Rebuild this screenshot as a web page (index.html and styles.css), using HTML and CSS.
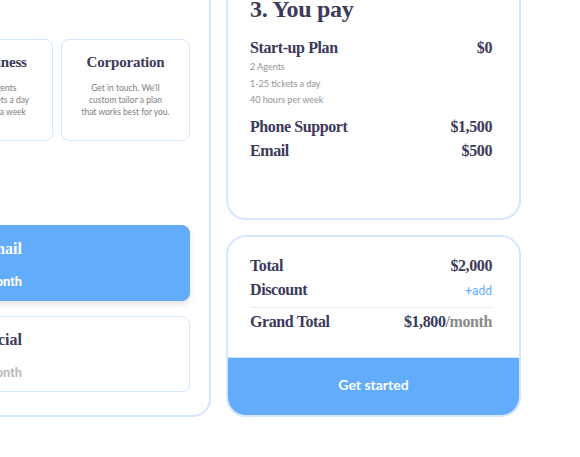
FILE: index.html
```html
<!DOCTYPE html>
<html lang="en">
<head>
    <meta charset="UTF-8">
    <meta name="viewport" content="width=device-width, initial-scale=1.0">
    <title>Build your support plan</title>
    <link rel="stylesheet" href="styles.css">
</head>
<body>
    <div class="builder">
        <section class="panel choose-panel">
            <h2 class="step-title">1. Pick a plan</h2>
            <div class="plans">
                <div class="plan">
                    <h3>Start-up</h3>
                    <p>2 Agents<br>1-25 tickets a day<br>40 hours per week</p>
                </div>
                <div class="plan">
                    <h3>Business</h3>
                    <p>5 Agents<br>50 tickets a day<br>80 hrs a week</p>
                </div>
                <div class="plan wide">
                    <h3>Corporation</h3>
                    <p>Get in touch. We'll<br>custom tailor a plan<br>that works best for you.</p>
                </div>
            </div>

            <h2 class="step-title channels-title">2. Add channels</h2>
            <div class="channels">
                <div class="channel selected">
                    <h3>Email</h3>
                    <span class="channel-price">$500/month</span>
                </div>
                <div class="channel">
                    <h3>Social</h3>
                    <span class="channel-price">$500/month</span>
                </div>
            </div>
        </section>

        <aside class="summary">
            <div class="panel pay-card">
                <h2 class="step-title">3. You pay</h2>
                <div class="row"><span>Start-up Plan</span><span>$0</span></div>
                <ul class="plan-details">
                    <li>2 Agents</li>
                    <li>1-25 tickets a day</li>
                    <li>40 hours per week</li>
                </ul>
                <div class="row extra"><span>Phone Support</span><span>$1,500</span></div>
                <div class="row"><span>Email</span><span>$500</span></div>
            </div>

            <div class="panel total-card">
                <div class="totals">
                    <div class="row"><span>Total</span><span>$2,000</span></div>
                    <div class="row"><span>Discount</span><a href="#" class="add-link">+add</a></div>
                    <div class="row grand"><span>Grand Total</span><span>$1,800<span class="per">/month</span></span></div>
                </div>
                <button class="start-button">Get started</button>
            </div>
        </aside>
    </div>
</body>
</html>
```

FILE: styles.css
```css
body {
    margin: 0;
    font-family: Lato, "Open Sans", sans-serif;
    background-color: white;
    color: #3b3a5a;
    overflow: hidden;
}
.builder {
    display: flex;
    gap: 15px;
    margin: -29px 0 0 -234px;
}
.panel {
    box-sizing: border-box;
    border: 2px solid #d6e7fd;
    border-radius: 20px;
    background-color: white;
}
.step-title {
    margin: 0;
    font-family: "Liberation Serif", serif;
    font-size: 24px;
    line-height: 30px;
    font-weight: bold;
    letter-spacing: -0.3px;
}

/* left: plan + channels */
.choose-panel {
    width: 445px;
    flex: none;
    padding: 22px 19px 23px;
    border-radius: 18px;
}
.choose-panel > .step-title {
    margin-bottom: 14px;
}
.choose-panel > .channels-title {
    margin: 24px 0 30px;
}
.plans {
    display: flex;
    justify-content: flex-end;
    gap: 8px;
}
.plan {
    box-sizing: border-box;
    width: 106px;
    padding: 12px 6px 22px;
    border: 1px solid #d6e7fd;
    border-radius: 8px;
    text-align: center;
}
.plan.wide {
    width: 129px;
}
.plan h3,
.channel h3 {
    margin: 0;
    font-family: "Liberation Serif", serif;
    font-size: 15px;
    line-height: 20px;
    letter-spacing: -0.2px;
}
.plan p {
    margin: 10px 0 0;
    font-size: 8.5px;
    line-height: 12px;
    color: #7d7d7d;
}
.channels {
    display: flex;
    flex-direction: column;
    gap: 15px;
}
.channel {
    padding: 13px 167px 9px 20px;
    border: 1px solid #d6e7fd;
    border-radius: 8px;
    text-align: right;
}
.channel h3 {
    margin-bottom: 14px;
    font-size: 16px;
    letter-spacing: 0;
}
.channel-price {
    display: block;
    font-family: Roboto, sans-serif;
    font-weight: bold;
    font-size: 13px;
    line-height: 18px;
    color: #bdbdbd;
}
.channel.selected {
    background-color: #62acfb;
    border-color: #62acfb;
    color: white;
    box-shadow: 0 3px 6px rgba(0,0,0,0.12);
}
.channel.selected .channel-price {
    color: white;
}

/* right: summary */
.summary {
    width: 295px;
    flex: none;
    display: flex;
    flex-direction: column;
    gap: 15px;
}
.pay-card {
    flex: 1;
    padding: 21px 27px 0 22px;
}
.pay-card .step-title {
    margin-bottom: 13px;
}
.row {
    display: flex;
    justify-content: space-between;
    align-items: baseline;
    font-family: "Liberation Serif", serif;
    font-weight: bold;
    font-size: 16px;
    line-height: 22px;
    letter-spacing: -0.4px;
}
.row + .row {
    margin-top: 2px;
}
.plan-details {
    list-style: none;
    margin: 0;
    padding: 0;
    font-size: 9px;
    line-height: 16.5px;
    color: #939393;
}
.row.extra {
    margin-top: 7px;
}
.total-card {
    overflow: hidden;
}
.totals {
    padding: 18px 27px 24px 22px;
}
.add-link {
    font-family: Roboto, sans-serif;
    font-weight: normal;
    font-size: 12px;
    letter-spacing: 0;
    color: #62acfb;
    text-decoration: none;
}
.row.grand {
    margin-top: 5px;
    padding-top: 3px;
    border-top: 1px solid #e3eefb;
}
.per {
    color: #8a8a8a;
}
.start-button {
    display: block;
    width: 100%;
    padding: 17px 0 20px;
    border: none;
    border-top: 1px solid #cfe4fd;
    background-color: #62acfb;
    color: white;
    font-family: Lato, sans-serif;
    font-weight: bold;
    font-size: 14px;
    line-height: 20px;
    cursor: pointer;
}
```
